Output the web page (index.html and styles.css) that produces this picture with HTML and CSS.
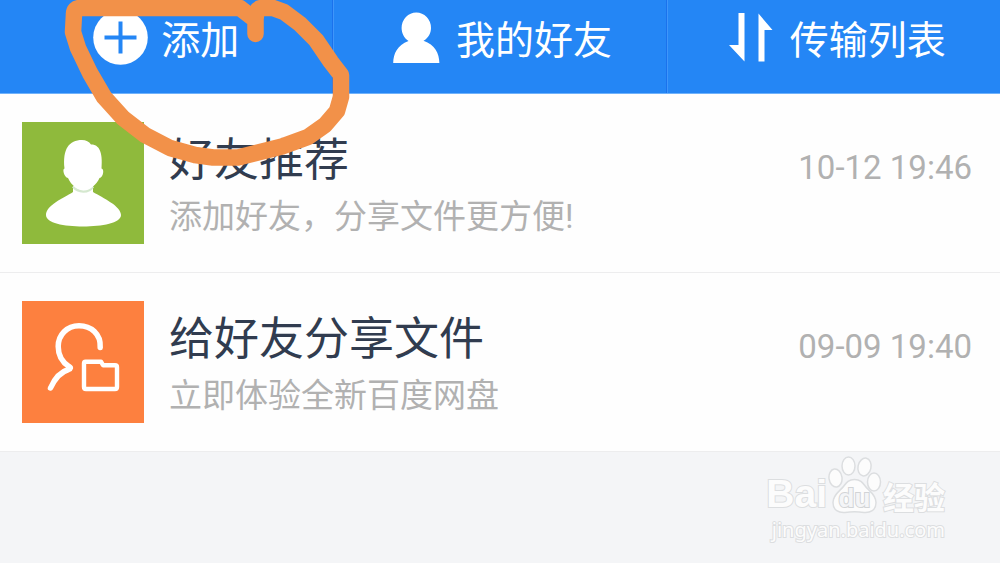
FILE: index.html
```html
<!DOCTYPE html>
<html lang="zh-CN">
<head>
<meta charset="utf-8">
<meta name="viewport" content="width=device-width, initial-scale=1">
<title>好友分享</title>
<link rel="stylesheet" href="styles.css">
</head>
<body>
<nav class="tabs">
  <button class="tab" type="button">
    <svg class="tab-icon" viewBox="0 0 54 54" aria-hidden="true"><circle cx="27.500" cy="26.500" r="27.300" fill="#fff"/><path d="M27.500 10.500v32M11.500 26.500h32" stroke="#2486f5" stroke-width="4" fill="none"/></svg>
    <span class="tab-label">添加</span>
  </button>
  <button class="tab" type="button">
    <svg class="tab-icon" viewBox="0 0 54 54" aria-hidden="true"><path d="M20.500 30C9 34.500 5.500 42.500 5.200 52h46.200C51.200 42.500 47 33.500 35.500 29.800 40.500 27 43 22 43 17A14.700 15.500 0 0 0 13.600 17C13.600 22 16 27 20.500 30Z" fill="#fff"/></svg>
    <span class="tab-label">我的好友</span>
  </button>
  <button class="tab" type="button">
    <svg class="tab-icon" viewBox="0 0 54 54" aria-hidden="true"><path d="M16.500 2h6v48.500L7 34h9.500ZM36.500 2.500l14 16.500H42.500V50.500H36.500Z" fill="#fff"/></svg>
    <span class="tab-label">传输列表</span>
  </button>
</nav>

<ul class="messages">
  <li>
    <a class="message" href="#">
      <svg class="thumb thumb-green" viewBox="0 0 122 122" aria-hidden="true">
        <path d="M51 64v6C42 76 24 83 24 93c0 8 18 11.500 37 11.500S99 101 99 93c0-9-18-17-28-23v-6Z" fill="#fff"/>
        <path d="M51 64.500C56 71 67 71 71 64.500" fill="none" stroke="#d5e8cf" stroke-width="2.500"/>
        <path d="M42.500 46.500C40.500 27 47 18 60 18c4 0 7 1.500 9 4.500 8 0 12 7 10.500 24 3 0 2 9-2 9.500C75 62 68 68.500 62 68.500S49 63 46 56c-4-.5-6-9.500-3.500-9.500Z" fill="#fff"/>
      </svg>
      <div class="copy">
        <h2 class="title">好友推荐</h2>
        <p class="summary">添加好友，分享文件更方便!</p>
      </div>
      <time class="time">10-12 19:46</time>
    </a>
  </li>
  <li>
    <a class="message" href="#">
      <svg class="thumb thumb-orange" viewBox="0 0 122 122" aria-hidden="true">
        <g fill="none" stroke="#fff" stroke-width="5.500" stroke-linecap="round" stroke-linejoin="round">
          <path d="M78.200 46.500C79 33 69 24.800 57 24.800c-12 0-20.800 9-20.800 20.700C36.200 54 40 61 47 65.500q3 1.500-.5 3C38 71 32.500 78 28.500 87"/>
          <path stroke-width="4.400" d="M63.500 60.700H79l2 3.500h12q2 0 2 2V86q0 2-2 2H64q-2 0-2-2V62.500q0-1.800 1.500-1.800Z"/>
        </g>
      </svg>
      <div class="copy">
        <h2 class="title">给好友分享文件</h2>
        <p class="summary">立即体验全新百度网盘</p>
      </div>
      <time class="time">09-09 19:40</time>
    </a>
  </li>
</ul>

<footer class="footer">
  <div class="watermark">
    <div class="brand">
      <span class="brand-latin">Bai</span>
      <svg class="paw" viewBox="0 0 54 60" aria-label="du">
        <g fill="#fcfcfc" stroke="#dcdee0" stroke-width="1.500">
          <ellipse cx="7.500" cy="22" rx="6.500" ry="9" transform="rotate(-8 7.500 22)"/>
          <ellipse cx="20.500" cy="10" rx="6.500" ry="9"/>
          <ellipse cx="36.500" cy="11" rx="6.500" ry="9" transform="rotate(12 36.500 11)"/>
          <ellipse cx="46" cy="26" rx="6.500" ry="9"/>
          <path d="M26.500 23.500c6 0 8 3 11 7s10.500 8 10.500 16-6 10.500-12 10c-6-.8-13-.8-19 0-6 .5-12-2-12-10s7.500-12 10.500-16 5-7 11-7Z"/>
        </g>
        <text class="paw-text" x="26.500" y="51" text-anchor="middle">du</text>
      </svg>
      <span class="brand-han">经验</span>
    </div>
    <div class="site">jingyan.baidu.com</div>
  </div>
</footer>

<svg class="scribble" viewBox="0 0 360 170" aria-hidden="true">
  <path d="M255.500 34V20L240 8H80Q74 8 74 14L73 32 78 48 90 73 104 97 123 118 145 135 170 148 195 155 213 157.500H238L256 153 282 146.500 308 137 325 125 337 111 341 97V75L331 62 316 40 300 24 284 12 273 8H262Q256 8 255.500 20" fill="none" stroke="#f29149" stroke-width="16.500" stroke-linecap="round" stroke-linejoin="round"/>
</svg>
</body>
</html>
```
FILE: styles.css
```css
* {
  box-sizing: border-box;
}

body {
  position: relative;
  margin: 0;
  overflow-x: hidden;
  background: #f4f5f7;
  font-family: Roboto, "Noto Sans CJK SC", sans-serif;
}

.tabs {
  display: grid;
  grid-template-columns: repeat(3, 1fr);
  background: #2486f5;
  border-bottom: 1px solid #6fb2fb;
}

.tab {
  display: flex;
  align-items: center;
  justify-content: center;
  gap: 14px;
  padding: 7px 0 24px;
  border: 0;
  border-left: 1px solid #3f96fa;
  border-right: 1px solid #1b72ec;
  background: none;
  color: #fff;
  font: inherit;
  font-size: 39px;
  line-height: 56px;
  white-space: nowrap;
}

.tab:first-child {
  border-left: 0;
}

.tab:last-child {
  border-right: 0;
}

.tab-icon {
  flex: none;
  width: 54px;
  height: 54px;
  overflow: visible;
}

.tab-label {
  padding-top: 6px;
}

.messages {
  margin: 0;
  padding: 0;
  list-style: none;
  background: #fefefe;
}

.message {
  display: flex;
  align-items: flex-start;
  padding: 28px 28px 28px 22px;
  border-bottom: 1px solid #ededee;
  color: inherit;
  text-decoration: none;
}

.thumb {
  flex: none;
  width: 122px;
  height: 122px;
}

.thumb-green {
  background: #8fba3c;
}

.thumb-orange {
  background: #fd803f;
}

.copy {
  flex: 1;
  min-width: 0;
  padding: 9px 0 0 25px;
}

.title {
  margin: 0;
  color: #313c4f;
  font-size: 45px;
  font-weight: 400;
  line-height: 60px;
}

.summary {
  margin: 0;
  color: #b1b1b1;
  font-size: 33px;
  line-height: 52px;
}

.time {
  flex: none;
  padding-top: 26px;
  color: #b1b1b1;
  font-size: 33px;
  line-height: 40px;
}

.footer {
  display: flex;
  justify-content: flex-end;
  padding: 4px 55px 16px 0;
}

.brand {
  display: flex;
  align-items: flex-end;
  gap: 1px;
  height: 60px;
}

.brand-latin,
.brand-han,
.site {
  color: #fcfcfc;
  -webkit-text-stroke: 2px #dcdee0;
  paint-order: stroke fill;
}

.brand-latin {
  font: bold 39px/44px "Liberation Sans", sans-serif;
}

.brand-han {
  font: bold 31px/40px "Noto Sans CJK SC", sans-serif;
}

.paw {
  flex: none;
  width: 54px;
  height: 60px;
}

.paw-text {
  fill: #f4f5f7;
  stroke: #d2d4d6;
  stroke-width: 2px;
  paint-order: stroke fill;
  font: bold 26px "Liberation Sans", sans-serif;
}

.site {
  font: 20px/28px "Noto Sans", sans-serif;
  text-align: right;
}

.scribble {
  position: absolute;
  top: 0;
  left: 0;
  width: 360px;
  height: 170px;
  pointer-events: none;
}
```
